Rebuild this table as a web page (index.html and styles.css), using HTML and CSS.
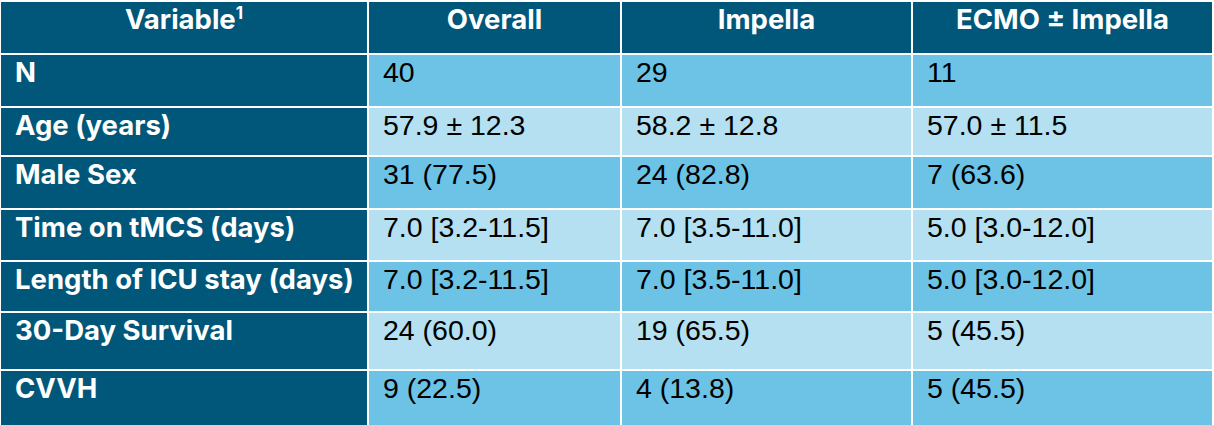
FILE: index.html
```html
<!DOCTYPE html>
<html lang="en">
<head>
<meta charset="utf-8">
<title>Patient characteristics</title>
<link rel="stylesheet" href="styles.css">
</head>
<body>
<div class="table">
  <div class="cell head">Variable<sup class="sup">1</sup></div>
  <div class="cell head">Overall</div>
  <div class="cell head">Impella</div>
  <div class="cell head">ECMO ± Impella</div>

  <div class="cell label">N</div>
  <div class="cell mid">40</div>
  <div class="cell mid">29</div>
  <div class="cell mid">11</div>

  <div class="cell label">Age (years)</div>
  <div class="cell light">57.9 ± 12.3</div>
  <div class="cell light">58.2 ± 12.8</div>
  <div class="cell light">57.0 ± 11.5</div>

  <div class="cell label">Male Sex</div>
  <div class="cell mid">31 (77.5)</div>
  <div class="cell mid">24 (82.8)</div>
  <div class="cell mid">7 (63.6)</div>

  <div class="cell label">Time on tMCS (days)</div>
  <div class="cell light">7.0 [3.2-11.5]</div>
  <div class="cell light">7.0 [3.5-11.0]</div>
  <div class="cell light">5.0 [3.0-12.0]</div>

  <div class="cell label">Length of ICU stay (days)</div>
  <div class="cell mid">7.0 [3.2-11.5]</div>
  <div class="cell mid">7.0 [3.5-11.0]</div>
  <div class="cell mid">5.0 [3.0-12.0]</div>

  <div class="cell label">30-Day Survival</div>
  <div class="cell light">24 (60.0)</div>
  <div class="cell light">19 (65.5)</div>
  <div class="cell light">5 (45.5)</div>

  <div class="cell label">CVVH</div>
  <div class="cell mid">9 (22.5)</div>
  <div class="cell mid">4 (13.8)</div>
  <div class="cell mid">5 (45.5)</div>
</div>
</body>
</html>
```
FILE: styles.css
```css
html, body {
  margin: 0;
  padding: 0;
  background: #ffffff;
}

.table {
  display: grid;
  grid-template-columns: 366px 251px 289px 299px;
  grid-template-rows: 51px 51px 47px 51px 50px 49px 56px 56px;
  gap: 2px;
  margin: 2px 0 0 1px;
  width: 1211px;
}

.cell {
  box-sizing: border-box;
  padding: 2px 0 0 14px;
  font-family: "Liberation Sans", Arial, sans-serif;
  font-size: 28.5px;
  line-height: 30px;
  color: #000000;
  white-space: nowrap;
}

.head,
.label {
  background: #01577a;
  color: #ffffff;
  font-family: Inter, "Open Sans", sans-serif;
  font-weight: 700;
  font-size: 27.5px;
  padding-top: 2px;
}

.head {
  text-align: center;
  padding-left: 0;
}

.mid {
  background: #6cc3e6;
}

.light {
  background: #b4e0f1;
}

.sup {
  font-size: 17px;
  line-height: 0;
  vertical-align: 10px;
}
```
